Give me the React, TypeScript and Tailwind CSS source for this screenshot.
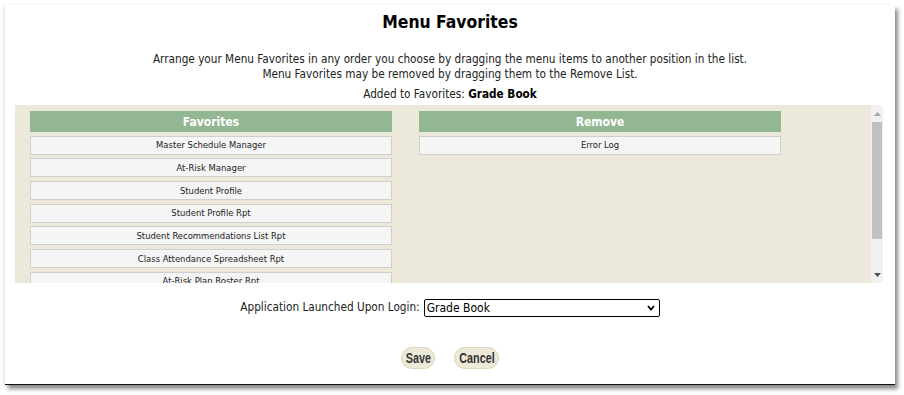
import React from "react";

const favorites = [
  "Master Schedule Manager",
  "At-Risk Manager",
  "Student Profile",
  "Student Profile Rpt",
  "Student Recommendations List Rpt",
  "Class Attendance Spreadsheet Rpt",
  "At-Risk Plan Roster Rpt",
];

function Item({ label }: { label: string }) {
  return (
    <div className="h-[19px] mt-[3.67px] flex items-center justify-center bg-[#f5f5f5] border border-[#cfcfcf] text-[9.4px] text-[#222] leading-none">
      {label}
    </div>
  );
}

function PillButton({ label, width }: { label: string; width: string }) {
  return (
    <button
      className={`h-[22px] ${width} rounded-full bg-[#ece9d8] border border-[#ddd6b8] flex items-center justify-center`}
    >
      <span
        className="inline-block scale-x-[0.77] text-[14px] font-bold text-[#333] leading-none"
        style={{ fontFamily: '"Liberation Sans", Arial, sans-serif' }}
      >
        {label}
      </span>
    </button>
  );
}

export default function App() {
  return (
    <div
      className="w-[904px] h-[395px] bg-white overflow-hidden"
      style={{ fontFamily: '"DejaVu Sans Condensed", "DejaVu Sans", Verdana, sans-serif' }}
    >
      <div className="ml-[5px] mt-[5px] w-[890px] h-[380px] bg-white border-b border-[#111] shadow-[3px_4px_4px_rgba(0,0,0,0.45),-2px_0_3px_rgba(0,0,0,0.08)] flex flex-col items-center">
        <h1 className="pt-[7px] leading-[20px] text-[17.4px] font-bold text-black">Menu Favorites</h1>
        <div className="mt-[20px] text-[11.7px] leading-[15px] text-[#222] text-center">
          <div>Arrange your Menu Favorites in any order you choose by dragging the menu items to another position in the list.</div>
          <div>Menu Favorites may be removed by dragging them to the Remove List.</div>
        </div>
        <div className="mt-[5px] text-[11.7px] leading-[15px] text-[#222]">
          Added to Favorites: <span className="font-bold text-black">Grade Book</span>
        </div>
        <div className="mt-[3px] self-stretch ml-[10px] mr-[12px] h-[178px] bg-[#ece9da] flex">
          <div className="flex-1 flex pl-[15px] pt-[6px] gap-[27px] overflow-hidden">
            <div className="w-[362px]">
              <div className="h-[21px] bg-[#93b792] text-white font-bold text-[12px] flex items-center justify-center">Favorites</div>
              {favorites.map((f) => (
                <Item key={f} label={f} />
              ))}
            </div>
            <div className="w-[362px]">
              <div className="h-[21px] bg-[#93b792] text-white font-bold text-[12px] flex items-center justify-center">Remove</div>
              <Item label="Error Log" />
            </div>
          </div>
          <div className="w-[12px] bg-[#f1f1f1] flex flex-col items-center">
            <div className="h-[17px] flex items-center justify-center">
              <svg width="7" height="4" viewBox="0 0 7 4"><path d="M3.5 0 L7 4 L0 4 Z" fill="#a3a3a3" /></svg>
            </div>
            <div className="w-[10px] h-[117px] bg-[#c1c1c1]" />
            <div className="flex-1" />
            <div className="h-[17px] flex items-center justify-center">
              <svg width="7" height="4" viewBox="0 0 7 4"><path d="M0 0 L7 0 L3.5 4 Z" fill="#505050" /></svg>
            </div>
          </div>
        </div>
        <div className="mt-[16px] flex items-center gap-[4px]">
          <span className="text-[11.7px] text-[#222]">Application Launched Upon Login:</span>
          <div className="relative w-[236px] h-[18px] border border-black rounded-[2px] flex items-center pl-[2px] text-[12px] text-black">
            Grade Book
            <svg className="absolute right-[4px] top-[5px]" width="8" height="6" viewBox="0 0 8 6">
              <path d="M1 1 L4 4.5 L7 1" stroke="#000" strokeWidth="1.8" fill="none" />
            </svg>
          </div>
        </div>
        <div className="mt-[30px] flex gap-[19px]">
          <PillButton label="Save" width="w-[34px]" />
          <PillButton label="Cancel" width="w-[45px]" />
        </div>
      </div>
    </div>
  );
}
